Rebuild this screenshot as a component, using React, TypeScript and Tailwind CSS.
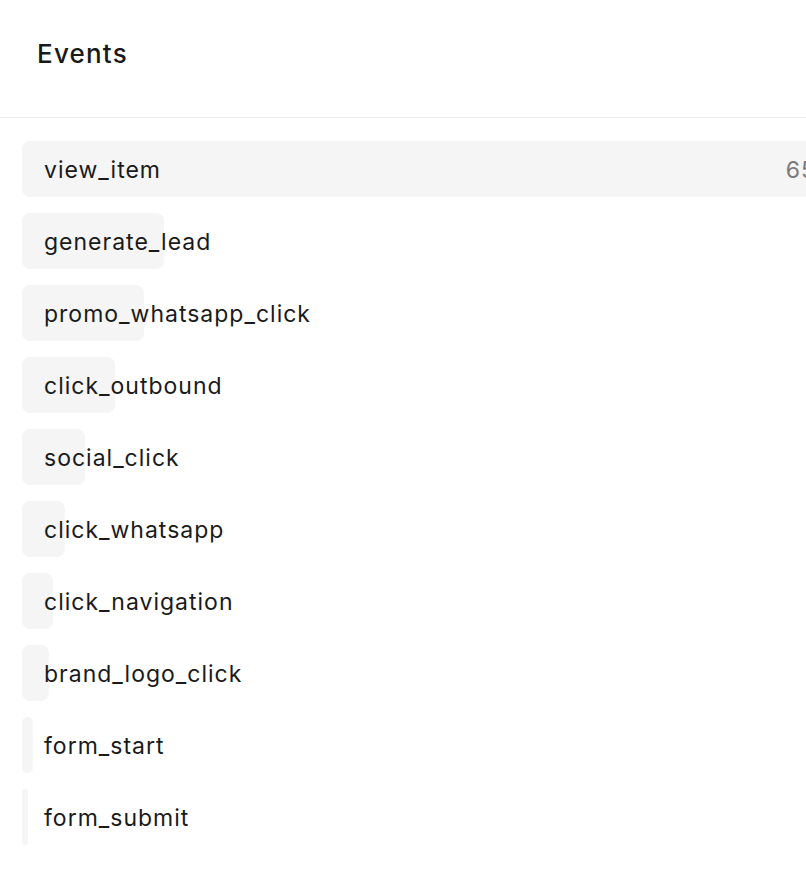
const events = [
  { name: 'view_item', value: 65, bar: 860 },
  { name: 'generate_lead', value: 11, bar: 142 },
  { name: 'promo_whatsapp_click', value: 10, bar: 122 },
  { name: 'click_outbound', value: 7, bar: 93 },
  { name: 'social_click', value: 5, bar: 63 },
  { name: 'click_whatsapp', value: 3, bar: 43 },
  { name: 'click_navigation', value: 2, bar: 31 },
  { name: 'brand_logo_click', value: 2, bar: 27 },
  { name: 'form_start', value: 1, bar: 11 },
  { name: 'form_submit', value: 1, bar: 6 },
]

export default function App() {
  return (
    <div className="h-[874px] w-full overflow-hidden bg-white font-['Inter',sans-serif] text-[#1a1a1a]">
      <div className="w-[860px]">
        <div className="flex h-[118px] items-center border-b border-[#ececec] pl-[37px]">
          <h1 className="pb-[10px] text-[26px] font-medium tracking-[1.2px]">Events</h1>
        </div>

        <ul className="flex flex-col gap-4 px-[22px] pt-[23px]">
          {events.map((e) => (
            <li key={e.name} className="relative flex h-[56px] items-center justify-between">
              <div
                className="absolute inset-y-0 left-0 rounded-lg bg-[#f5f5f5]"
                style={{ width: e.bar }}
              />
              <span className="relative pl-[22px] pt-[2px] text-[23px] tracking-[1px]">{e.name}</span>
              {e.name === 'view_item' && (
                <span className="relative pr-[22px] pt-[2px] text-[23px] tracking-[1px] text-[#7a7a7a]">
                  {e.value}
                </span>
              )}
            </li>
          ))}
        </ul>
      </div>
    </div>
  )
}
